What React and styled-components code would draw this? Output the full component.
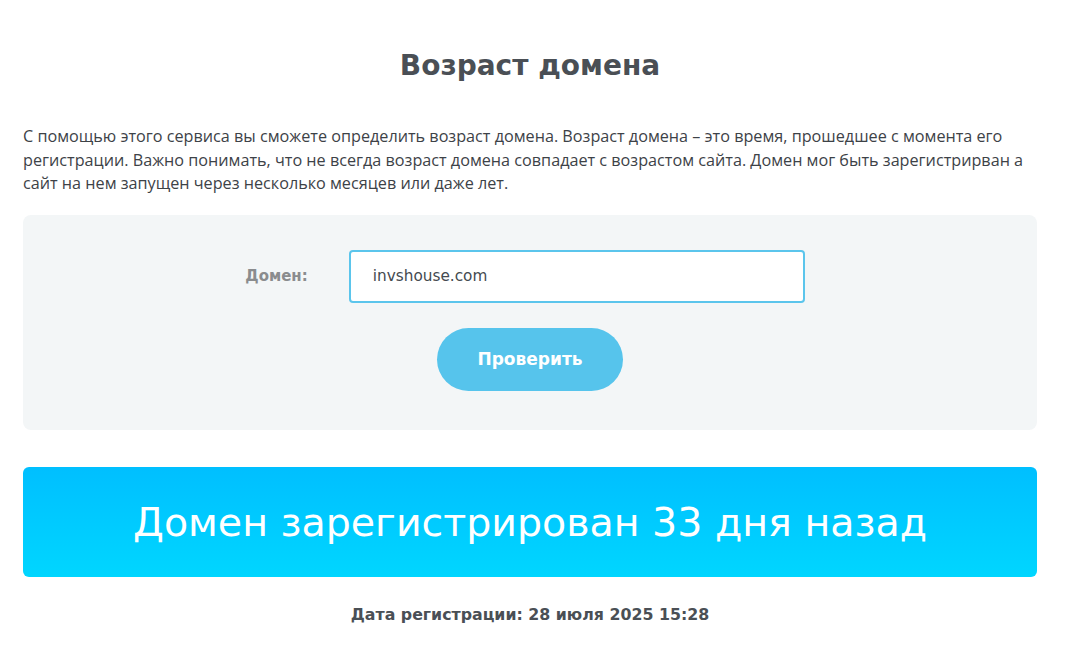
import React from 'react';
import styled, { createGlobalStyle } from 'styled-components';

const GlobalStyle = createGlobalStyle`
  html, body {
    margin: 0;
    padding: 0;
    background: #ffffff;
  }
  body {
    font-family: 'Open Sans', 'Noto Sans', sans-serif;
    color: #3d4247;
  }
  * {
    box-sizing: border-box;
  }
`;

const Page = styled.main`
  width: 1014px;
  margin: 0 0 0 23px;
  padding-top: 46px;
`;

const Title = styled.h1`
  margin: 0 0 39px;
  text-align: center;
  font-family: 'DejaVu Sans', sans-serif;
  font-weight: 700;
  font-size: 28px;
  line-height: 40px;
  color: #4a4f55;
`;

const Lead = styled.p`
  margin: 0 0 19px;
  font-family: 'Open Sans', sans-serif;
  font-size: 16.2px;
  line-height: 23.5px;
  color: #3d4247;
`;

const FormBox = styled.section`
  display: flex;
  flex-direction: column;
  align-items: center;
  gap: 25px;
  padding: 35px 0 39px;
  background: #f3f6f7;
  border-radius: 8px;
`;

const FieldRow = styled.div`
  display: flex;
  align-items: center;
  gap: 41px;
  margin-left: -10px;
`;

const Label = styled.label`
  font-family: 'DejaVu Sans', sans-serif;
  font-weight: 700;
  font-size: 15px;
  color: #8a8c8e;
`;

const Input = styled.input`
  width: 456px;
  height: 53px;
  padding: 0 22px;
  border: 2px solid #5bc5ec;
  border-radius: 4px;
  background: #ffffff;
  font-family: 'DejaVu Sans', sans-serif;
  font-size: 15.3px;
  color: #444a50;
  outline: none;
`;

const Button = styled.button`
  width: 186px;
  height: 63px;
  border: none;
  border-radius: 32px;
  background: #56c4ec;
  color: #ffffff;
  font-family: 'DejaVu Sans', sans-serif;
  font-weight: 700;
  font-size: 17px;
  cursor: pointer;
`;

const Result = styled.div`
  display: flex;
  align-items: center;
  justify-content: center;
  height: 110px;
  margin-top: 37px;
  border-radius: 6px;
  background: linear-gradient(180deg, #00bfff 0%, #00d6ff 100%);
  color: #ffffff;
  font-family: 'DejaVu Sans', sans-serif;
  font-weight: 400;
  font-size: 39.5px;
`;

const DateLine = styled.p`
  margin: 28px 0 0;
  text-align: center;
  font-family: 'DejaVu Sans', sans-serif;
  font-weight: 700;
  font-size: 15.8px;
  color: #4a4f55;
`;

export default function App() {
  return (
    <>
      <GlobalStyle />
      <Page>
        <Title>Возраст домена</Title>
        <Lead>
          С помощью этого сервиса вы сможете определить возраст домена. Возраст домена – это время,
          прошедшее с момента его регистрации. Важно понимать, что не всегда возраст домена совпадает с
          возрастом сайта. Домен мог быть зарегистрирван а сайт на нем запущен через несколько месяцев или
          даже лет.
        </Lead>
        <FormBox>
          <FieldRow>
            <Label htmlFor="domain">Домен:</Label>
            <Input id="domain" defaultValue="invshouse.com" />
          </FieldRow>
          <Button type="button">Проверить</Button>
        </FormBox>
        <Result>Домен зарегистрирован 33 дня назад</Result>
        <DateLine>Дата регистрации: 28 июля 2025 15:28</DateLine>
      </Page>
    </>
  );
}
